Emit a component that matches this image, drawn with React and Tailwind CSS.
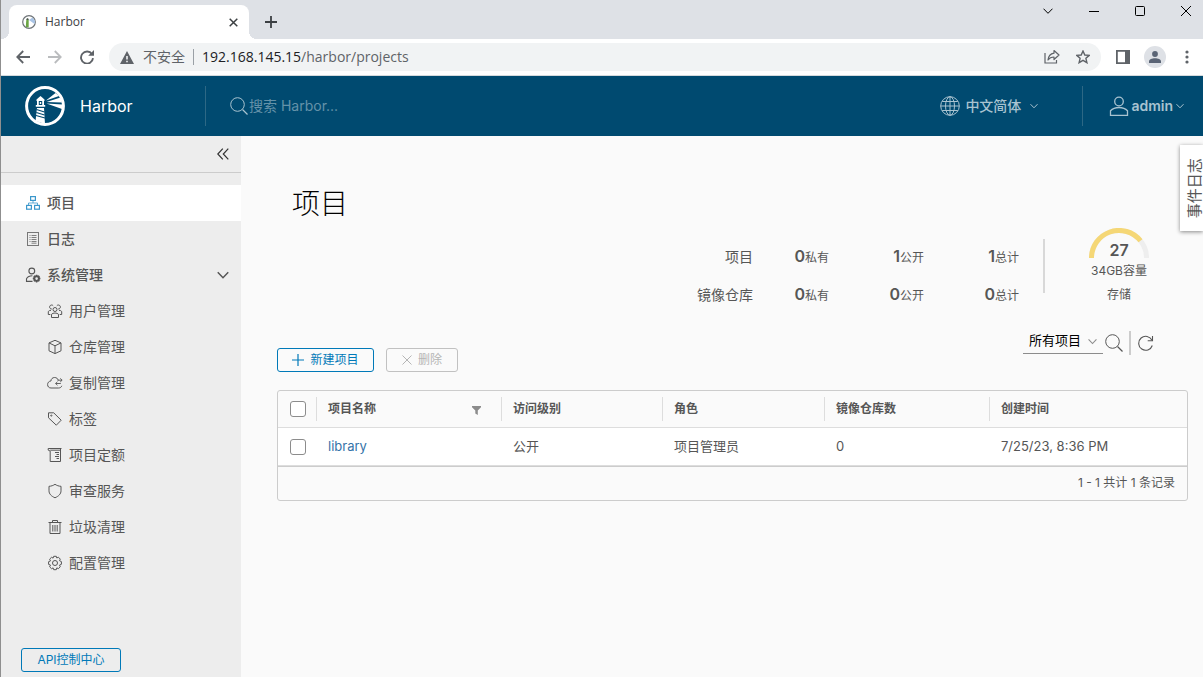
import React, { useState } from 'react';

const Svg = ({ size = 16, box = 16, className = '', strokeWidth = 1, children }) => (
  <svg
    width={size}
    height={size}
    viewBox={`0 0 ${box} ${box}`}
    fill="none"
    stroke="currentColor"
    strokeWidth={strokeWidth}
    className={`shrink-0 ${className}`}
    aria-hidden="true"
  >
    {children}
  </svg>
);

const ChevronDown = ({ size = 8, className, strokeWidth = 1 }) => (
  <Svg size={size} box={8} className={className} strokeWidth={strokeWidth}>
    <path d="M0.5 2.2 4 5.8l3.5-3.6" />
  </Svg>
);

const SearchIcon = ({ className }) => (
  <Svg size={18} box={18} className={className}>
    <circle cx="7.5" cy="7.5" r="6.8" />
    <path d="m12.5 12.5 5 5" strokeWidth="1.3" />
  </Svg>
);

/* Sidebar icons */
const icons = {
  projects: (
    <Svg strokeWidth={1.2}>
      <rect x="5.6" y="1.6" width="4.8" height="3.8" />
      <rect x="1.6" y="10.4" width="4.8" height="3.8" />
      <rect x="9.6" y="10.4" width="4.8" height="3.8" />
      <path d="M8 5.4V8M3.5 10V8h9v2" strokeWidth="0.8" />
    </Svg>
  ),
  logs: (
    <Svg>
      <rect x="2.5" y="1.5" width="11" height="13" stroke="#777" />
      <path
        d="M4.5 4.5h1M6.5 4.5h5M4.5 6.5h1M6.5 6.5h5M4.5 8.5h1M6.5 8.5h5M4.5 10.5h1M6.5 10.5h5M6.500 12.200h5"
        stroke="#808080"
      />
    </Svg>
  ),
  admin: (
    <Svg strokeWidth={1.1}>
      <circle cx="6.8" cy="4" r="2.9" />
      <path d="M7.5 14.400H1.500v-2.600C2.600 9.800 4.600 8.800 7.400 8.800" />
      <circle cx="11.600" cy="11.600" r="2.300" strokeWidth="2" />
      <path
        d="M11.600 7.800v1.400M11.600 14v1.400M7.800 11.600h1.400M14 11.600h1.400M8.900 8.900l1 1M13.300 13.300l1 1M14.300 8.900l-1 1M9.900 13.300l-1 1"
        strokeWidth="1.5"
      />
    </Svg>
  ),
  users: (
    <Svg strokeWidth={1}>
      <circle cx="8" cy="6.5" r="2" />
      <path d="M4.500 14.500v-3.200c.8-.9 2-1.300 3.500-1.300s2.700.4 3.500 1.300v3.200z" />
      <path d="M4.800 6A2 2 0 1 1 6.200 2.800M11.200 6A2 2 0 1 0 9.800 2.800" />
      <path d="M3.300 11.500H1.300V8.500c.6-.8 1.500-1.200 2.700-1.200M12.700 11.500h2V8.500c-.6-.8-1.500-1.200-2.700-1.200" />
    </Svg>
  ),
  registries: (
    <Svg>
      <path d="m8 1.300 6 2.600v7.900l-6 2.800-6-2.800V3.900zM2 3.900l6 2.900 6-2.900M8 6.800v7.600" />
    </Svg>
  ),
  replications: (
    <Svg>
      <path d="M11.300 5.400C10.800 3.400 9.300 2.500 7.600 2.500 5.500 2.500 4 4 3.900 6 1.800 6.200.6 7.700.6 9.600c0 2 1.400 3.400 3.400 3.400h7.500c1.700 0 2.900-.8 3.300-2.200" />
      <path
        d="M10.500 5.200h4.600m-1.900-1.800 1.900 1.800-1.900 1.800M13.800 8.500H8.600m1.900-1.800L8.600 8.500l1.900 1.800"
        strokeWidth="0.9"
      />
    </Svg>
  ),
  labels: (
    <Svg>
      <path d="M1.500 1.800h5.200l7.500 7.400-4.900 5L1.500 6.800z" strokeLinejoin="round" />
      <circle cx="4.300" cy="4.600" r="0.600" />
    </Svg>
  ),
  quotas: (
    <Svg>
      <path d="M1.200 1.500h13.300M1.200 1.500v1.600l2 1V14.500h10.300V1.500M3.200 3.200h10" />
      <path d="M8 5.500h4M9.500 7.500H12M8 9.500h4M9.500 11.500H12" />
    </Svg>
  ),
  shield: (
    <Svg>
      <path d="M8 1.300c1.700 1.200 3.800 1.900 6 2v4.500c0 3.100-2.200 5.300-6 7-3.800-1.700-6-3.900-6-7V3.300c2.200-.1 4.300-.8 6-2z" />
    </Svg>
  ),
  trash: (
    <Svg>
      <path d="M1.500 3.500h13M5.500 3.200V1.500h5v1.700M3 3.500v11h10v-11" />
      <path d="M5.800 6v6.500M8 6v6.500M10.200 6v6.500" />
    </Svg>
  ),
  config: (
    <Svg>
      <circle cx="8" cy="8" r="2.500" />
      <path
        d="M6.700 1.300h2.600l.5 1.700 1.600-.8 1.900 1.900-.8 1.600 1.900.9v2.700l-1.900.8.8 1.700-1.900 1.800-1.600-.7-.5 1.800H6.700l-.6-1.800-1.600.8-1.900-1.900.9-1.700-1.900-.7V6.700l1.900-.8-.9-1.700 1.900-1.900 1.600.8z"
        strokeLinejoin="round"
      />
    </Svg>
  ),
};

const subItems = [
  { id: 'users', label: '用户管理' },
  { id: 'registries', label: '仓库管理' },
  { id: 'replications', label: '复制管理' },
  { id: 'labels', label: '标签' },
  { id: 'quotas', label: '项目定额' },
  { id: 'shield', label: '审查服务' },
  { id: 'trash', label: '垃圾清理' },
  { id: 'config', label: '配置管理' },
];

const stats = [
  { label: '项目', values: [[0, '私有'], [1, '公开'], [1, '总计']] },
  { label: '镜像仓库', values: [[0, '私有'], [0, '公开'], [0, '总计']] },
];

const projects = [
  { name: 'library', access: '公开', role: '项目管理员', repos: 0, created: '7/25/23, 8:36 PM' },
];

const HarborLogo = () => (
  <svg width="40" height="40" viewBox="0 0 40 40" className="shrink-0" aria-hidden="true">
    <circle cx="20" cy="20" r="18.400" fill="none" stroke="#fff" strokeWidth="3" />
    {/* light beams */}
    <path d="M21 14.500 30.500 7l3.500 3zM21.500 16l14-4.500 1.500 5zM21.500 17.500l15.500 1v4.500z" fill="#fff" />
    {/* tower */}
    <path d="m15.500 10 4 3.500V15h-8v-1.500zM12 15h1.800v4H12zM17.200 15H19v4h-1.800zM10.800 19h9.400v1.800h-9.400z" fill="#fff" />
    <path d="M14.800 16h1.400v2h-1.400z" fill="#fff" />
    <path d="M12 22h7l1 16-9.500-3z" fill="#fff" />
    <path d="m11.500 23.500 8 2.500M11.300 26.500l8.200 2.500M11 29.500l9 2.500" stroke="#004a70" strokeWidth="1.200" />
  </svg>
);

const TitleBar = () => (
  <div className="flex h-[39px] items-end bg-[#dee1e6]">
    <span className="size-2 bg-[radial-gradient(circle_at_top_left,transparent_8px,white_8px)]" />
    <div className="flex h-[34px] w-60 items-center rounded-t-lg bg-white pr-[11px] pl-[13px]">
      <svg width="14" height="14" viewBox="0 0 14 14" aria-hidden="true">
        <circle cx="7" cy="7" r="6.300" fill="#fff" stroke="#6f7478" strokeWidth="1.200" />
        <path d="m7 5 3.500-2.500L13 6l-.5 3z" fill="#a9c4e6" />
        <path d="M4.300 5h2.400v7.500L3.800 12z" fill="#6ba543" />
        <path d="m5.500 3 1.200 1v1H4.300V4z" fill="#4b5a4b" />
      </svg>
      <span className="ml-[9px] flex-1 text-xs text-[#3c4043]">Harbor</span>
      <button type="button" aria-label="关闭标签页" className="text-[#3c4043]">
        <Svg size={9} box={9} strokeWidth={1.5}>
          <path d="m.7.7 7.600 7.600M8.300.7.700 8.300" />
        </Svg>
      </button>
    </div>
    <span className="size-2 bg-[radial-gradient(circle_at_top_right,transparent_8px,white_8px)]" />
    <button type="button" aria-label="新标签页" className="mb-[11px] ml-2 text-[#3c4043]">
      <Svg size={12} box={12} strokeWidth={1.8}>
        <path d="M6 0v12M0 6h12" />
      </Svg>
    </button>
    <div className="mr-3 ml-auto flex gap-9 self-start pt-[6px] text-black">
      <button type="button" aria-label="搜索标签页">
        <Svg size={10} box={10}><path d="m.5 2.700 4.500 4.600 4.500-4.600" /></Svg>
      </button>
      <button type="button" aria-label="最小化">
        <Svg size={10} box={10}><path d="M0 5.500h10" /></Svg>
      </button>
      <button type="button" aria-label="最大化">
        <Svg size={10} box={10}><rect x="0.5" y="0.5" width="9" height="9" rx="1" /></Svg>
      </button>
      <button type="button" aria-label="关闭">
        <Svg size={10} box={10}><path d="m0 0 10 10M10 0 0 10" /></Svg>
      </button>
    </div>
  </div>
);

const AddressBar = () => (
  <div className="flex h-[37px] items-center border-b border-[#d5dadd] bg-white pr-[10px] pl-[15px] text-[#5f6368]">
    <button type="button" aria-label="后退">
      <Svg size={14} box={14} strokeWidth={1.8}><path d="M14 7H1.500M7.200 1 1.300 7l5.900 6" /></Svg>
    </button>
    <button type="button" aria-label="前进" className="ml-[18px] text-[#babcbe]">
      <Svg size={14} box={14} strokeWidth={1.8}><path d="M0 7h12.500M6.800 1l5.900 6-5.900 6" /></Svg>
    </button>
    <button type="button" aria-label="重新加载" className="ml-[18px]">
      <Svg size={14} box={14} strokeWidth={1.9}>
        <path d="M12 4.200A6 6 0 1 0 13 8.200" />
        <path d="M14 0v5.800H8.200z" fill="currentColor" stroke="none" />
      </Svg>
    </button>
    <div className="ml-[15px] flex h-7 min-w-0 flex-1 items-center rounded-full bg-[#f1f3f4] px-[11px] text-sm">
      <svg width="14" height="13" viewBox="0 0 14 13" fill="currentColor" aria-hidden="true">
        <path fillRule="evenodd" d="M7 0 14 13H0zM6.200 5v3.500h1.600V5zM6.200 9.700v1.600h1.600V9.700z" />
      </svg>
      <span className="ml-[9px]">不安全</span>
      <span className="mx-2 h-4 w-px bg-[#9aa0a6]" />
      <span className="flex-1 truncate"><span className="text-[#202124]">192.168.145.15</span>/harbor/projects</span>
      <button type="button" aria-label="分享">
        <Svg strokeWidth={1.2}>
          <path d="M1 4v10h11.500v-3" />
          <path d="M10 1.500 15 6l-5 4.500V8C7.500 8 5.500 8.800 4 11c.4-3.600 2.500-6.200 6-6.800z" strokeLinejoin="round" />
        </Svg>
      </button>
      <button type="button" aria-label="收藏" className="ml-4">
        <Svg size={14} box={14} strokeWidth={1.4}>
          <path d="m7 1 1.800 4 4.400.4-3.300 2.900 1 4.400L7 10.400l-3.900 2.300 1-4.400L.8 5.400 5.200 5z" />
        </Svg>
      </button>
    </div>
    <button type="button" aria-label="侧边栏" className="ml-[15px]">
      <Svg size={14} box={14} strokeWidth={1.8}>
        <path d="M.9.9h12.200v12.200H.9z" />
        <path d="M9 1h4v12H9z" fill="currentColor" stroke="none" />
      </Svg>
    </button>
    <button type="button" aria-label="用户" className="ml-[14px] flex size-[22px] items-center justify-center rounded-full bg-[#dee1e6] text-[#5a6475]">
      <svg width="12" height="12" viewBox="0 0 12 12" fill="currentColor" aria-hidden="true">
        <circle cx="6" cy="3" r="2.900" />
        <path d="M0 12v-1.500C0 8.500 3 7.300 6 7.300s6 1.200 6 3.200V12z" />
      </svg>
    </button>
    <button type="button" aria-label="更多" className="ml-[15px]">
      <svg width="12" height="14" viewBox="0 0 12 14" fill="currentColor" aria-hidden="true">
        <circle cx="6" cy="2" r="1.600" />
        <circle cx="6" cy="7" r="1.600" />
        <circle cx="6" cy="12" r="1.600" />
      </svg>
    </button>
  </div>
);

const Header = () => (
  <header className="flex h-[60px] items-center bg-[#004a70] pr-[19px] pl-6 text-[#a9c3d0]">
    <a href="#" className="flex w-[180px] items-center gap-[15px] text-base text-white">
      <HarborLogo />
      Harbor
    </a>
    <span className="h-10 w-px bg-[#2d6885]" />
    <label className="ml-6 flex flex-1 items-center gap-px">
      <SearchIcon />
      <input
        type="text"
        aria-label="搜索"
        placeholder="搜索 Harbor..."
        className="w-full bg-transparent text-sm outline-none placeholder:text-[#6592a9]"
      />
    </label>
    <button type="button" className="flex items-center text-sm font-medium">
      <Svg size={20} box={20} className="mr-[5px]">
        <circle cx="10" cy="10" r="9.300" />
        <ellipse cx="10" cy="10" rx="4.500" ry="9.300" />
        <path d="M10 .7v18.600M.7 10h18.600M2.200 5.500h15.600M2.200 14.500h15.600" />
      </Svg>
      中文简体
      <ChevronDown className="ml-[9px]" />
    </button>
    <span className="mr-[26px] ml-11 h-10 w-px bg-[#2d6885]" />
    <button type="button" className="flex items-center text-sm font-semibold">
      <Svg size={20} box={20} strokeWidth={1.3} className="mr-[2px]">
        <circle cx="10" cy="5.500" r="4.300" />
        <path d="M1.500 19.300v-4.500c2-2.200 5-3.300 8.500-3.300s6.500 1.100 8.500 3.300v4.500z" />
      </Svg>
      admin
      <ChevronDown className="ml-[3px]" />
    </button>
  </header>
);

const Sidebar = () => (
  <aside className="flex w-60 shrink-0 flex-col bg-[#ededed] text-sm text-[#565656]">
    <div className="flex h-[37px] items-center justify-end border-b border-[#ccc] pr-3">
      <button type="button" aria-label="折叠" className="text-[#313131]">
        <Svg size={12} box={12} strokeWidth={1.2}>
          <path d="M5.800.7.800 6l5 5.300M11.300.7l-5 5.300 5 5.300" />
        </Svg>
      </button>
    </div>
    <nav className="mt-3">
      <a href="#" className="flex h-9 items-center gap-[6px] bg-white pl-6 font-medium">
        <span className="text-[#3b97cb]">{icons.projects}</span>
        项目
      </a>
      <a href="#" className="flex h-9 items-center gap-[6px] pl-6 font-medium">
        {icons.logs}
        日志
      </a>
      <button type="button" className="flex h-9 w-full items-center gap-[6px] pr-3 pl-6 font-medium">
        {icons.admin}
        系统管理
        <ChevronDown size={12} className="ml-auto" />
      </button>
      {subItems.map((item) => (
        <a key={item.id} href="#" className="flex h-9 items-center gap-[6px] pl-[46px]">
          {icons[item.id]}
          {item.label}
        </a>
      ))}
    </nav>
    <a
      href="#"
      className="mt-auto mb-[5px] ml-5 flex h-6 w-[100px] items-center justify-center rounded-[3px] border border-[#0079b8] text-xs text-[#0079b8]"
    >
      API控制中心
    </a>
  </aside>
);

const Summary = () => (
  <section className="mt-[6px] flex items-start justify-end pr-[39px]">
    <div className="mt-[10px] grid grid-cols-[auto_76px_95px_95px] text-right">
      {stats.map((row) => (
        <React.Fragment key={row.label}>
          <span className="text-sm leading-[38px]">{row.label}</span>
          {row.values.map(([count, label]) => (
            <span key={label} className="text-xs leading-[36px]">
              <span className="text-base leading-[36px] font-semibold">{count}</span>
              {label}
            </span>
          ))}
        </React.Fragment>
      ))}
    </div>
    <span className="mt-[11px] ml-6 h-[54px] w-[2px] bg-[#d8d8d8]" />
    <div className="ml-11 flex w-[60px] flex-col items-center text-xs leading-6">
      <div className="relative h-[31px] w-[60px]">
        <svg width="60" height="30" viewBox="0 0 60 30" fill="none" strokeWidth="5" aria-hidden="true">
          <path d="M2.500 30a27.500 27.500 0 0 1 55 0" stroke="#eee" />
          <path d="M2.500 30A27.500 27.500 0 0 1 51.500 12.800" stroke="#f5d776" />
        </svg>
        <span className="absolute inset-x-0 bottom-px text-center text-base leading-4 font-semibold">27</span>
      </div>
      <span>34GB容量</span>
      <span>存储</span>
    </div>
  </section>
);

const Toolbar = () => (
  <div className="mt-[17px] flex items-start pr-[34px]">
    <div className="mt-[17px] flex gap-3 text-xs">
      <button type="button" className="flex h-6 w-[97px] items-center justify-center gap-[6px] rounded-[3px] border border-[#0079b8] text-[#0079b8]">
        <Svg size={12} box={12} strokeWidth={1.2}><path d="M6 0v12M0 6h12" /></Svg>
        新建项目
      </button>
      <button type="button" disabled className="flex h-6 w-[72px] items-center justify-center gap-[6px] rounded-[3px] border border-[#c1c1c1] text-[#b5b5b5]">
        <Svg size={10} box={10}><path d="m.5.5 9 9M9.500.5l-9 9" /></Svg>
        删除
      </button>
    </div>
    <div className="ml-auto flex items-center">
      <div className="relative h-6">
        <select
          aria-label="项目类型"
          className="block h-[23px] w-20 appearance-none border-b border-[#8c8c8c] bg-transparent pb-1 pl-[6px] text-[13px] leading-4 text-black outline-none"
        >
          <option>所有项目</option>
          <option>私有项目</option>
          <option>公开项目</option>
        </select>
        <ChevronDown size={9} className="pointer-events-none absolute top-[6px] right-[6px] text-[#8c8c8c]" />
      </div>
      <button type="button" aria-label="搜索" className="ml-[2px]"><SearchIcon /></button>
      <span className="mx-[6px] h-6 w-[2px] bg-[#ccc]" />
      <button type="button" aria-label="刷新">
        <Svg size={17} box={17} strokeWidth={1.1}>
          <path d="M15 5.300A7 7 0 1 0 15.300 10.500" />
          <path d="M15.500 1v4.800h-4.800" />
        </Svg>
      </button>
    </div>
  </div>
);

const HeadCell = ({ children, filter }) => (
  <th scope="col" className="h-9 p-0 text-left font-semibold">
    <div className="flex h-6 items-center justify-between border-l border-[#ddd] pr-5 pl-[11px]">
      {children}
      {filter && (
        <button type="button" aria-label="筛选" className="pt-1 text-[#8c8c8c]">
          <svg width="9" height="9" viewBox="0 0 9 9" fill="currentColor" aria-hidden="true">
            <path d="M0 0h9v1.300L5.800 4.500V9L3.300 7.500v-3L0 1.300z" />
          </svg>
        </button>
      )}
    </div>
  </th>
);

const checkbox =
  'block size-4 appearance-none rounded-[3px] border border-[#8c8c8c] bg-white checked:bg-[#0079b8]';

const ProjectTable = () => {
  const [selected, setSelected] = useState([]);
  const allSelected = selected.length === projects.length;

  const toggle = (name) =>
    setSelected((prev) => (prev.includes(name) ? prev.filter((n) => n !== name) : [...prev, name]));

  return (
    <div className="mt-[18px] overflow-hidden rounded-[3px] border border-[#ccc]">
      <table className="w-full table-fixed border-collapse text-[13px]">
        <colgroup>
          <col className="w-[38px]" />
          <col className="w-[185px]" />
          <col className="w-[161px]" />
          <col className="w-[162px]" />
          <col className="w-[165px]" />
          <col />
        </colgroup>
        <thead className="border-b border-[#ddd] text-xs">
          <tr>
            <th scope="col" className="p-0 pl-3">
              <input
                type="checkbox"
                aria-label="全选"
                checked={allSelected}
                onChange={() => setSelected(allSelected ? [] : projects.map((p) => p.name))}
                className={checkbox}
              />
            </th>
            <HeadCell filter>项目名称</HeadCell>
            <HeadCell>访问级别</HeadCell>
            <HeadCell>角色</HeadCell>
            <HeadCell>镜像仓库数</HeadCell>
            <HeadCell>创建时间</HeadCell>
          </tr>
        </thead>
        <tbody>
          {projects.map((p) => (
            <tr key={p.name} className="h-[38px] border-b border-[#ddd] bg-white">
              <td className="pt-px pl-3">
                <input
                  type="checkbox"
                  aria-label={p.name}
                  checked={selected.includes(p.name)}
                  onChange={() => toggle(p.name)}
                  className={checkbox}
                />
              </td>
              <td className="pt-px pl-3"><a href="#" className="text-[#3573a8]">{p.name}</a></td>
              <td className="pt-px pl-3">{p.access}</td>
              <td className="pt-px pl-3">{p.role}</td>
              <td className="pt-px pl-3">{p.repos}</td>
              <td className="pt-px pl-3">{p.created}</td>
            </tr>
          ))}
        </tbody>
      </table>
      <div className="flex h-[34px] items-center justify-end border-t border-[#ccc] pr-3 text-xs">
        1 - 1 共计 {projects.length} 条记录
      </div>
    </div>
  );
};

export default function App() {
  return (
    <div className="flex min-h-screen flex-col border-l border-[#8f8f8f] bg-[#fafafa] font-['Open_Sans','Noto_Sans_CJK_SC',sans-serif]">
      <TitleBar />
      <AddressBar />
      <div className="flex flex-1 flex-col font-['Inter','Noto_Sans_CJK_SC',sans-serif]">
        <Header />
        <div className="relative flex flex-1 overflow-hidden">
          <Sidebar />
          <main className="min-w-0 flex-1 pt-[50px] pr-[15px] pl-9 text-[#565656]">
            <h1 className="pl-[15px] text-[28px] leading-9 font-light text-black">项目</h1>
            <Summary />
            <Toolbar />
            <ProjectTable />
          </main>
          <button
            type="button"
            className="absolute top-[9px] right-0 flex h-[86px] w-[23px] items-center justify-center bg-white pl-[7px] text-[15px] text-[#565656] shadow-[0_1px_4px_#888]"
          >
            <span className="-rotate-90 whitespace-nowrap">事件日志</span>
          </button>
        </div>
      </div>
    </div>
  );
}
